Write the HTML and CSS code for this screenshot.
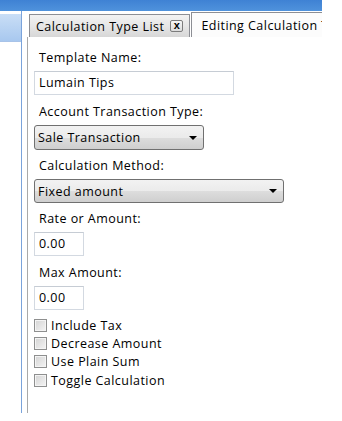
FILE: index.html
```html
<!DOCTYPE html>
<html lang="en">
<head>
  <meta charset="UTF-8">
  <title>Editing Calculation Type</title>
  <link rel="stylesheet" href="styles.css">
</head>
<body>
  <div class="titlebar"></div>
  <div class="main">
    <div class="sidebar">
      <div class="sidebar-head"></div>
    </div>
    <div class="workspace">
      <div class="tabs">
        <div class="tab">
          <span>Calculation Type List</span>
          <span class="tab-close">x</span>
        </div>
        <div class="tab active">
          <span>Editing Calculation Type</span>
        </div>
      </div>
      <div class="panel">
        <label class="field-label">Template Name:</label>
        <div class="textbox wide">Lumain Tips</div>

        <label class="field-label">Account Transaction Type:</label>
        <div class="dropdown medium">
          <span>Sale Transaction</span>
          <span class="arrow"></span>
        </div>

        <label class="field-label">Calculation Method:</label>
        <div class="dropdown long">
          <span>Fixed amount</span>
          <span class="arrow"></span>
        </div>

        <label class="field-label">Rate or Amount:</label>
        <div class="textbox small">0.00</div>

        <label class="field-label">Max Amount:</label>
        <div class="textbox small">0.00</div>

        <div class="checks">
          <div class="check"><span class="box"></span>Include Tax</div>
          <div class="check"><span class="box"></span>Decrease Amount</div>
          <div class="check"><span class="box"></span>Use Plain Sum</div>
          <div class="check"><span class="box"></span>Toggle Calculation</div>
        </div>
      </div>
    </div>
  </div>
</body>
</html>
```

FILE: styles.css
```css
* { margin: 0; padding: 0; box-sizing: border-box; }
body {
  width: 342px;
  height: 421px;
  overflow: hidden;
  background: #fff;
  font-family: 'Open Sans', 'Noto Sans', sans-serif;
  font-size: 12.5px;
  letter-spacing: 0.45px;
  color: #000;
}
.titlebar {
  width: 322px;
  height: 11px;
  background: linear-gradient(#3f82d4, #4f92dc);
}
.main {
  display: flex;
  height: 402px;
}
.sidebar {
  width: 22px;
  border-right: 1px solid #7aa3db;
  padding-top: 3px;
}
.sidebar-head {
  height: 28px;
  background: linear-gradient(#c9def6, #a8c8ef);
  border-bottom: 1px solid #a8c3e8;
}
.workspace {
  width: 295px;
  margin-left: 5px;
  overflow: hidden;
  display: flex;
  flex-direction: column;
}
.tabs {
  display: flex;
  align-items: flex-end;
  height: 26px;
  padding-left: 2px;
  flex-shrink: 0;
}
.tab {
  display: flex;
  align-items: center;
  height: 23px;
  padding: 0 6px 0 6px;
  border: 1px solid #8c8e94;
  border-bottom: none;
  background: linear-gradient(#f2f2f2, #e6e6e6 50%, #d7d7d7);
  white-space: nowrap;
  flex-shrink: 0;
}
.tab.active {
  height: 25px;
  margin-left: 1px;
  padding-left: 9px;
  background: #fcfcfc;
}
.tab-close {
  margin-left: 6px;
  width: 13px;
  height: 12px;
  border: 1px solid #7c7c7c;
  border-radius: 2px;
  background: linear-gradient(#f6f6f6, #dcdcdc);
  font-family: 'Liberation Sans', sans-serif;
  font-size: 11px;
  font-weight: bold;
  line-height: 9px;
  text-align: center;
  letter-spacing: 0;
}
.panel {
  flex: 1;
  border-left: 1px solid #a9a9a9;
  padding: 13px 0 0 6px;
  display: flex;
  flex-direction: column;
  align-items: flex-start;
}
.field-label {
  display: block;
  line-height: 16px;
  padding-left: 5px;
  margin-bottom: 5px;
}
.textbox {
  height: 24px;
  border: 1px solid #d3d9e1;
  border-top-color: #c6ccd4;
  padding-left: 4px;
  line-height: 22px;
  margin-bottom: 9px;
}
.textbox.wide { width: 200px; }
.textbox.small { width: 50px; }
.dropdown {
  display: flex;
  align-items: center;
  justify-content: space-between;
  height: 25px;
  border: 1px solid #707070;
  border-radius: 3px;
  padding: 0 6px 0 3px;
  background: linear-gradient(#f2f2f2, #ebebeb 50%, #dddddd 51%, #cfcfcf);
  margin-bottom: 8px;
}
.dropdown.medium { width: 170px; }
.dropdown.long { width: 250px; height: 24px; }
.arrow {
  width: 0;
  height: 0;
  border-left: 4px solid transparent;
  border-right: 4px solid transparent;
  border-top: 4px solid #000;
}
.checks {
  display: flex;
  flex-direction: column;
  margin-top: -3px;
}
.check {
  display: flex;
  align-items: center;
  height: 18.3px;
}
.box {
  width: 13px;
  height: 13px;
  margin-right: 4px;
  border: 1px solid #8e8f8f;
  background: linear-gradient(135deg, #d4d4d4, #f4f4f4);
  box-shadow: inset 0 0 0 1px #f4f4f4;
}
```
